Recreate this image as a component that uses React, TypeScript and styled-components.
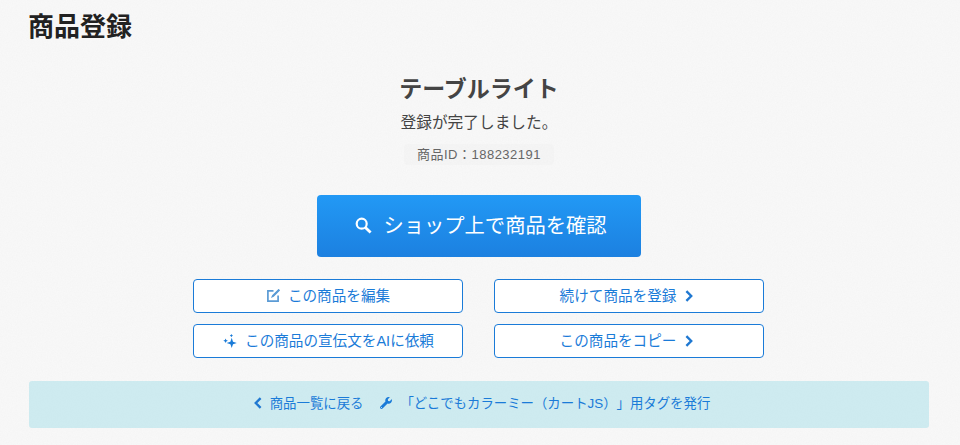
import React from 'react'
import styled, { createGlobalStyle } from 'styled-components'
import { FaWrench } from 'react-icons/fa'

// faint paper grain, same as the page background in the screenshot
const grain = encodeURIComponent(
  `<svg xmlns="http://www.w3.org/2000/svg" width="200" height="200"><filter id="n"><feTurbulence type="fractalNoise" baseFrequency="0.8" numOctaves="2" stitchTiles="stitch"/><feColorMatrix values="0 0 0 0 0.5 0 0 0 0 0.5 0 0 0 0 0.5 0 0 0 0.07 0"/></filter><rect width="200" height="200" filter="url(#n)"/></svg>`
)

const GlobalStyle = createGlobalStyle`
  html, body {
    margin: 0;
    padding: 0;
    background: #f9f9f9 url("data:image/svg+xml,${grain}");
  }
  body {
    font-family: "Liberation Sans", "Noto Sans CJK JP", sans-serif;
    color: #333;
    text-spacing-trim: space-all;
  }
`

const Page = styled.div`
  width: 960px;
  height: 445px;
  box-sizing: border-box;
  padding: 0 31px 0 29px;
  overflow: hidden;
`

const PageTitle = styled.h1`
  margin: 0 0 0 -1px;
  padding-top: 8px;
  height: 50px;
  box-sizing: border-box;
  font-size: 26px;
  line-height: 38px;
  font-weight: 700;
  color: #222;
`

const Result = styled.section`
  display: flex;
  flex-direction: column;
  align-items: center;
  padding-top: 23px;
`

const ProductName = styled.h2`
  margin: 0;
  font-size: 23px;
  line-height: 32px;
  font-weight: 700;
  color: #444;
`

const Message = styled.p`
  margin: 6px 0 0;
  font-size: 15.7px;
  line-height: 24px;
  color: #444;
`

const ProductId = styled.div`
  margin-top: 9px;
  padding: 0 13px;
  font-size: 13px;
  letter-spacing: 0.5px;
  line-height: 21px;
  color: #666;
  background: rgba(0, 0, 0, 0.012);
  border-radius: 3px;
`

const PrimaryButton = styled.a`
  margin-top: 30px;
  width: 324px;
  height: 62px;
  box-sizing: border-box;
  padding: 0 0 5px 4px;
  display: flex;
  align-items: center;
  justify-content: center;
  gap: 11px;
  font-size: 20.3px;
  color: #fff;
  background: linear-gradient(#2299f5, #1c80e0);
  border-radius: 4px;
  svg {
    margin-top: 3px;
  }
`

const ActionGrid = styled.div`
  margin: 22px 1px 0 0;
  display: grid;
  grid-template-columns: 270px 270px;
  column-gap: 31px;
  row-gap: 11px;
`

const ActionButton = styled.a<{ $side: 'left' | 'right' }>`
  height: 34px;
  box-sizing: border-box;
  padding-bottom: 3px;
  padding-${(p) => (p.$side === 'left' ? 'left: 1px' : 'right: 5px')};
  display: flex;
  align-items: center;
  justify-content: center;
  gap: ${(p) => (p.$side === 'left' ? 8 : 9)}px;
  font-size: 14.6px;
  color: #1a7bd8;
  background: #fff;
  border: 1px solid #1a7bd8;
  border-radius: 4px;
  svg {
    flex: none;
    margin-top: 2px;
  }
`

const LinkBar = styled.nav`
  margin-top: 23px;
  height: 47px;
  box-sizing: border-box;
  padding: 0 0 5px 6px;
  display: flex;
  align-items: center;
  justify-content: center;
  gap: 17px;
  background: rgba(160, 222, 232, 0.48);
  border-radius: 3px;
`

const BarLink = styled.a<{ $gap: number }>`
  display: flex;
  align-items: center;
  gap: ${(p) => p.$gap}px;
  font-size: 13.4px;
  color: #1a7bd8;
  svg {
    margin-top: 2px;
  }
`

const SearchIcon = () => (
  <svg width="17" height="17" viewBox="0 0 17 17" fill="none" stroke="#fff">
    <circle cx="6.7" cy="6.7" r="5" strokeWidth="2.2" />
    <path d="M10.4 10.4 15.6 15.6" strokeWidth="2.8" />
  </svg>
)

const EditIcon = () => (
  <svg width="13" height="13" viewBox="0 0 13 13" fill="none" stroke="#5b9bd5" strokeWidth="1.7">
    <path d="M6.5 1.9H.9v10.2h10.2V6.5" />
    <path d="M11.6.6 5.6 6.6 5 8 6.4 7.4 12.4 1.4z" fill="#5b9bd5" strokeWidth="1.1" />
  </svg>
)

const SparkleIcon = () => (
  <svg width="14" height="14" viewBox="0 0 14 14" fill="#1a7bd8">
    <path d="M8.7 3.8 10 7.7 13.8 9 10 10.3 8.7 14 7.4 10.3 3.6 9 7.4 7.7z" />
    <path d="M2.6 4.4 3.3 6 4.9 6.7 3.3 7.4 2.6 9 1.9 7.4.3 6.7 1.9 6z" />
    <path d="M8.4 0 9 1 10 1.6 9 2.2 8.4 3.2 7.8 2.2 6.8 1.6 7.8 1z" />
  </svg>
)

const Chevron = ({ left }: { left?: boolean }) => (
  <svg width="8" height="12" viewBox="0 0 8 12" fill="none" stroke="#1f78d1" strokeWidth="2.4">
    <path d={left ? 'M6.6 1.2 1.8 6l4.8 4.8' : 'M1.4 1.2 6.2 6l-4.8 4.8'} />
  </svg>
)

export default function App() {
  return (
    <Page>
      <GlobalStyle />
      <PageTitle>商品登録</PageTitle>
      <Result>
        <ProductName>テーブルライト</ProductName>
        <Message>登録が完了しました。</Message>
        <ProductId>商品ID：188232191</ProductId>
        <PrimaryButton>
          <SearchIcon />
          ショップ上で商品を確認
        </PrimaryButton>
        <ActionGrid>
          <ActionButton $side="left">
            <EditIcon />
            この商品を編集
          </ActionButton>
          <ActionButton $side="right">
            続けて商品を登録
            <Chevron />
          </ActionButton>
          <ActionButton $side="left">
            <SparkleIcon />
            この商品の宣伝文をAIに依頼
          </ActionButton>
          <ActionButton $side="right">
            この商品をコピー
            <Chevron />
          </ActionButton>
        </ActionGrid>
      </Result>
      <LinkBar>
        <BarLink $gap={8}>
          <Chevron left />
          商品一覧に戻る
        </BarLink>
        <BarLink $gap={8}>
          <FaWrench size={12} />
          「どこでもカラーミー（カートJS）」用タグを発行
        </BarLink>
      </LinkBar>
    </Page>
  )
}
